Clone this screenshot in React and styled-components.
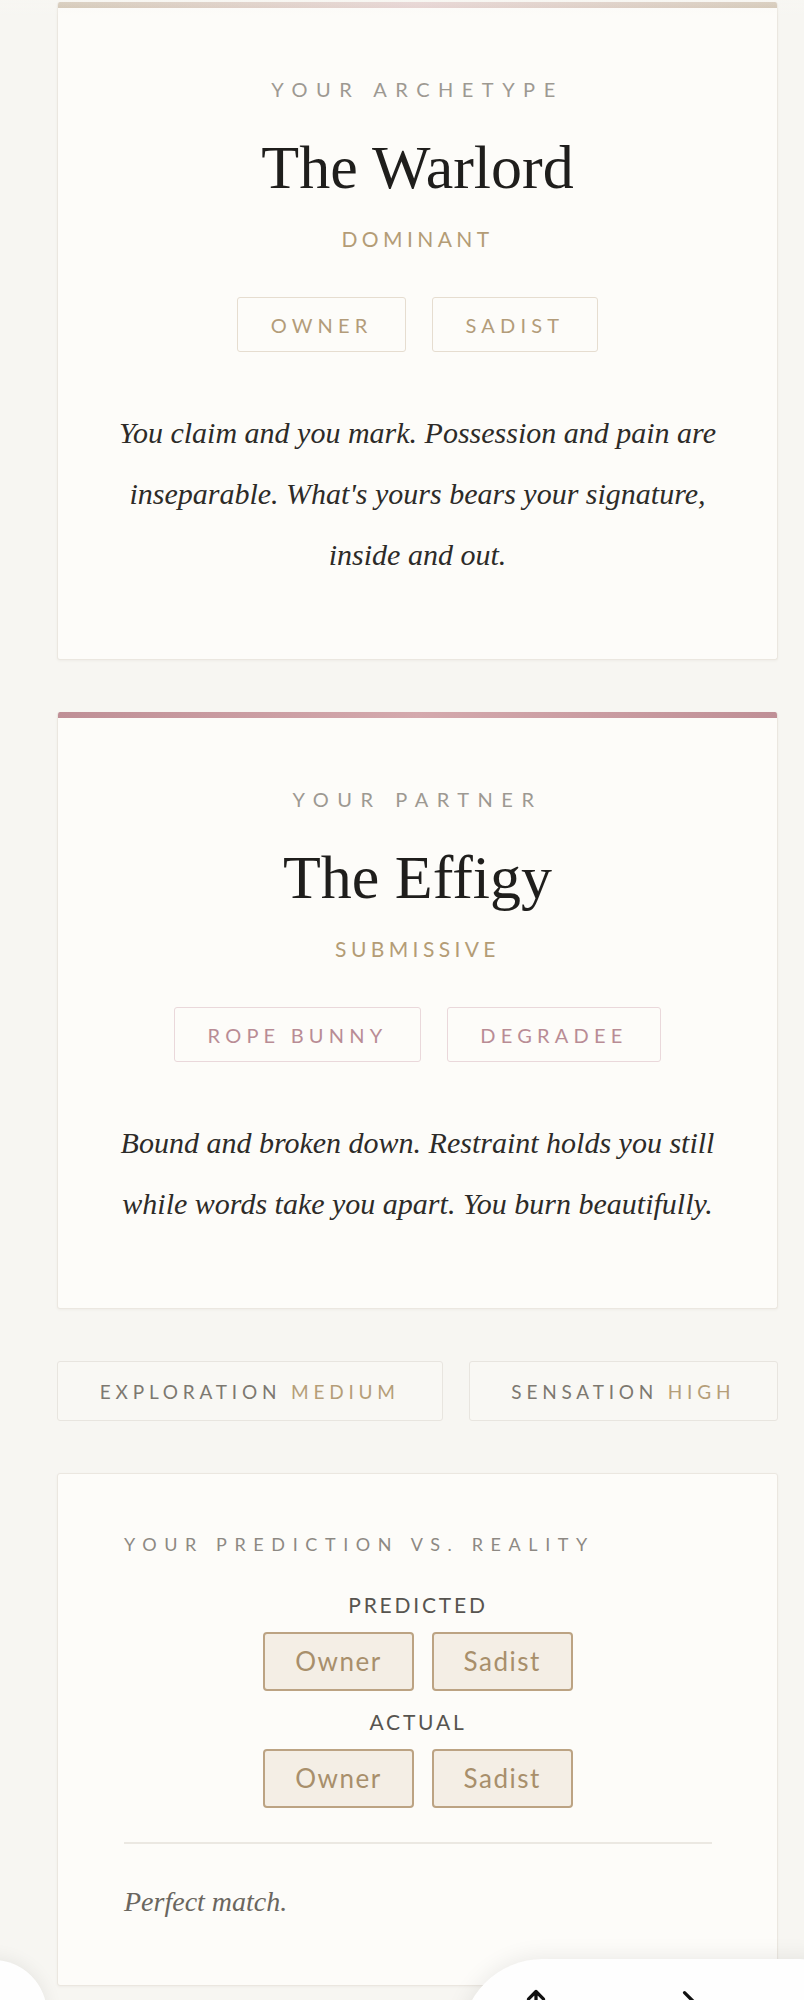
import React from "react";
import styled, { createGlobalStyle } from "styled-components";

const GlobalStyle = createGlobalStyle`
  html, body {
    margin: 0;
    padding: 0;
    background: #f7f6f2;
  }
  body {
    font-family: Lato, "Noto Sans", sans-serif;
    -webkit-font-smoothing: antialiased;
  }
  *, *::before, *::after { box-sizing: border-box; }
`;

const Page = styled.main`
  display: flex;
  flex-direction: column;
  gap: 52px;
  padding: 2px 26px 0 57px;
  min-height: 2000px;
`;

const Card = styled.section`
  background: #fdfcf9;
  border: 1px solid #ebe7e0;
  border-top: ${(p) => (p.$accent ? "none" : "1px solid #ebe7e0")};
  border-radius: 3px;
  box-shadow: 0 1px 3px rgba(70, 60, 40, 0.05);
  overflow: hidden;
`;

const AccentBar = styled.div`
  height: 6px;
  background: ${(p) =>
    p.$tone === "rose"
      ? "linear-gradient(90deg, #bf8f96 0%, #d4a9ad 50%, #bf8f96 100%)"
      : "linear-gradient(90deg, #cdbfac 0%, #e2cccb 50%, #cdbfac 100%)"};
`;

const ProfileBody = styled.div`
  display: flex;
  flex-direction: column;
  align-items: center;
  text-align: center;
  padding: 71px 50px 74px;
`;

const Eyebrow = styled.div`
  font-size: 20px;
  line-height: 1;
  letter-spacing: 8.5px;
  text-transform: uppercase;
  color: #9d9992;
`;

const Title = styled.h2`
  margin: 37px 0 0;
  font-family: "Liberation Serif", "Times New Roman", serif;
  font-weight: 400;
  font-size: 62px;
  line-height: 1;
  color: #1f1e1c;
`;

const Role = styled.div`
  margin-top: 29.5px;
  font-size: 21px;
  line-height: 1;
  letter-spacing: 4.4px;
  text-transform: uppercase;
  color: #b49c76;
`;

const TagRow = styled.div`
  display: flex;
  justify-content: center;
  gap: 26px;
  margin-top: 48.5px;
`;

const Tag = styled.span`
  display: flex;
  align-items: center;
  height: 55px;
  padding: 0 32.5px;
  border: 1px solid ${(p) => (p.$tone === "rose" ? "#ead8db" : "#e6ddd0")};
  border-radius: 3px;
  font-size: 20px;
  line-height: 1;
  letter-spacing: 5.2px;
  text-transform: uppercase;
  color: ${(p) => (p.$tone === "rose" ? "#b98c95" : "#b39c7a")};
`;

const Description = styled.p`
  margin: 50px 0 0;
  width: 100%;
  font-family: "Liberation Serif", "Times New Roman", serif;
  font-style: italic;
  font-size: 30px;
  line-height: 61px;
  color: #2d2b28;
`;

const StatRow = styled.div`
  display: flex;
  gap: 26px;
`;

const StatBox = styled.div`
  flex: 1 1 auto;
  display: flex;
  align-items: center;
  justify-content: center;
  height: 60px;
  background: #f9f8f4;
  border: 1px solid #e8e5df;
  border-radius: 3px;
  font-size: 19px;
  line-height: 1;
  letter-spacing: 4.8px;
  text-transform: uppercase;
  color: #7d7870;
  white-space: nowrap;
`;

const StatValue = styled.span`
  color: #b59e78;
`;

const CompareBody = styled.div`
  display: flex;
  flex-direction: column;
  align-items: center;
  padding: 61px 65px 62px 66px;
`;

const SectionLabel = styled.div`
  align-self: flex-start;
  font-size: 18px;
  line-height: 1;
  letter-spacing: 7.6px;
  text-transform: uppercase;
  color: #8d8983;
`;

const CompareLabel = styled.div`
  margin-top: ${(p) => (p.$first ? "41px" : "20.5px")};
  font-size: 21px;
  line-height: 1;
  letter-spacing: 2.8px;
  text-transform: uppercase;
  color: #57544f;
`;

const ChoiceRow = styled.div`
  display: flex;
  justify-content: center;
  gap: 18px;
  margin-top: 16.5px;
`;

const Choice = styled.span`
  display: flex;
  align-items: center;
  height: 59px;
  padding: 0 30px;
  background: #f4eee5;
  border: 2px solid #bca383;
  border-radius: 4px;
  font-size: 26px;
  line-height: 1;
  letter-spacing: 1.5px;
  color: #a88f6b;
`;

const Divider = styled.div`
  align-self: stretch;
  height: 2px;
  margin-top: 34px;
  background: #ebe8e2;
`;

const Verdict = styled.p`
  align-self: stretch;
  margin: 37px 0 0;
  font-family: "Liberation Serif", "Times New Roman", serif;
  font-style: italic;
  font-size: 28px;
  line-height: 42px;
  color: #6a665f;
`;

const TopFade = styled.div`
  position: fixed;
  left: 0;
  top: 0;
  width: 100%;
  height: 18px;
  background: linear-gradient(rgba(250, 249, 246, 0.35), rgba(250, 249, 246, 0));
  pointer-events: none;
`;

const FloatingDot = styled.div`
  position: fixed;
  left: -61px;
  top: 1960px;
  width: 108px;
  height: 108px;
  border-radius: 50%;
  background: #fefefe;
  box-shadow: 0 -2px 18px rgba(0, 0, 0, 0.07);
`;

const Toolbar = styled.nav`
  position: fixed;
  left: 461px;
  top: 1959px;
  width: 420px;
  height: 164px;
  border-radius: 82px;
  background: #fefefe;
  box-shadow: 0 -2px 22px rgba(0, 0, 0, 0.08);
  display: flex;
  align-items: flex-start;
  gap: 124px;
  padding: 29px 0 0 61px;
`;

const ToolIcon = styled.svg`
  width: 28px;
  height: 28px;
  flex: none;
  fill: none;
  stroke: #111;
  stroke-width: 2.8;
  stroke-linecap: round;
  stroke-linejoin: round;
`;

export default function App() {
  return (
    <>
      <GlobalStyle />
      <Page>
        <Card $accent>
          <AccentBar $tone="gold" />
          <ProfileBody>
            <Eyebrow>Your Archetype</Eyebrow>
            <Title>The Warlord</Title>
            <Role>Dominant</Role>
            <TagRow>
              <Tag>Owner</Tag>
              <Tag>Sadist</Tag>
            </TagRow>
            <Description>
              You claim and you mark. Possession and pain are inseparable. What's yours bears your
              signature, inside and out.
            </Description>
          </ProfileBody>
        </Card>

        <Card $accent>
          <AccentBar $tone="rose" />
          <ProfileBody>
            <Eyebrow>Your Partner</Eyebrow>
            <Title>The Effigy</Title>
            <Role>Submissive</Role>
            <TagRow>
              <Tag $tone="rose">Rope Bunny</Tag>
              <Tag $tone="rose">Degradee</Tag>
            </TagRow>
            <Description>
              Bound and broken down. Restraint holds you still while words take you apart. You burn
              beautifully.
            </Description>
          </ProfileBody>
        </Card>

        <StatRow>
          <StatBox>
            Exploration&nbsp;<StatValue>Medium</StatValue>
          </StatBox>
          <StatBox>
            Sensation&nbsp;<StatValue>High</StatValue>
          </StatBox>
        </StatRow>

        <Card>
          <CompareBody>
            <SectionLabel>Your Prediction vs. Reality</SectionLabel>
            <CompareLabel $first>Predicted</CompareLabel>
            <ChoiceRow>
              <Choice>Owner</Choice>
              <Choice>Sadist</Choice>
            </ChoiceRow>
            <CompareLabel>Actual</CompareLabel>
            <ChoiceRow>
              <Choice>Owner</Choice>
              <Choice>Sadist</Choice>
            </ChoiceRow>
            <Divider />
            <Verdict>Perfect match.</Verdict>
          </CompareBody>
        </Card>
      </Page>

      <TopFade />
      <FloatingDot />
      <Toolbar>
        <ToolIcon viewBox="0 0 24 24">
          <path d="M12 3 L5.5 9.5 M12 3 L18.5 9.5 M12 3 V21" />
        </ToolIcon>
        <ToolIcon viewBox="0 0 24 24">
          <path d="M9 4 L17 12 L9 20" />
        </ToolIcon>
      </Toolbar>
    </>
  );
}
